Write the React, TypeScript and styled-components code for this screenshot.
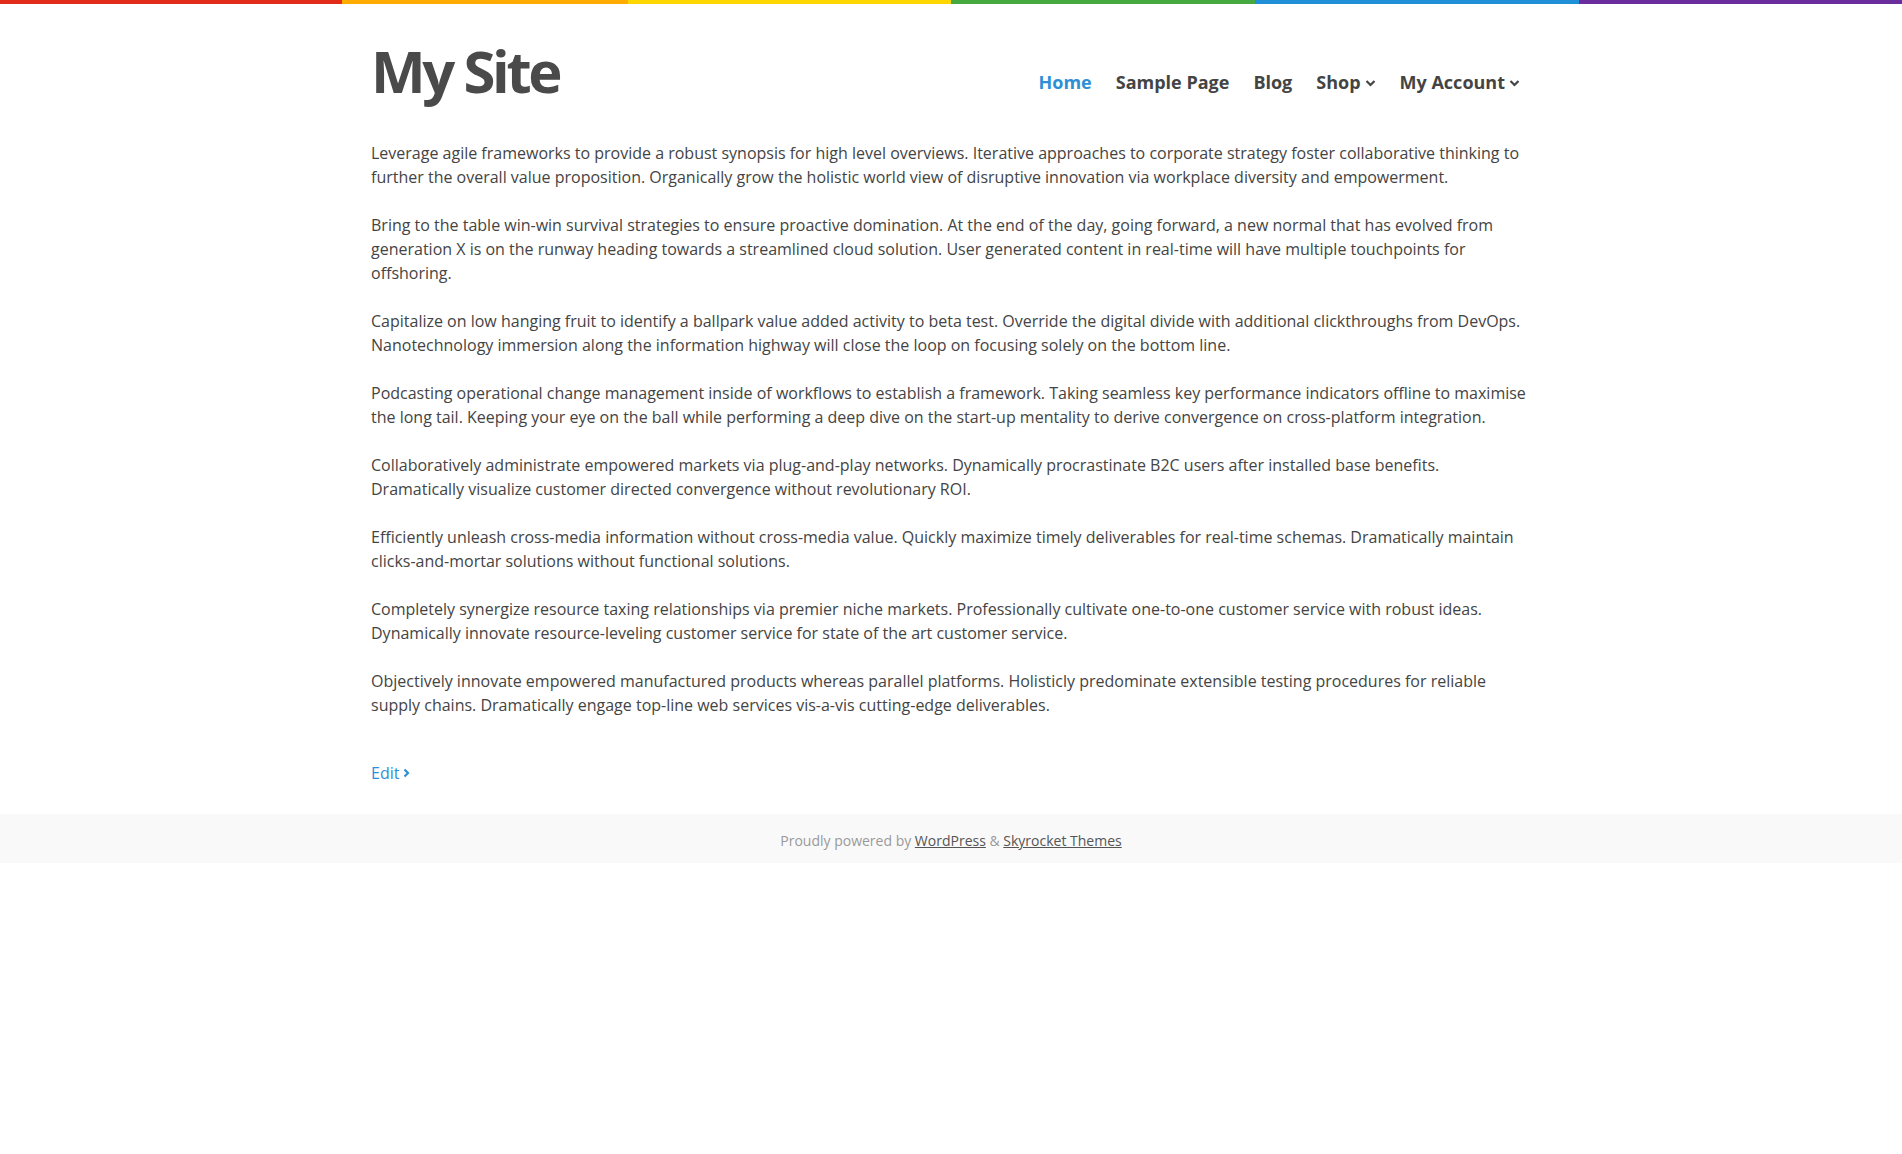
import styled, { createGlobalStyle } from 'styled-components';

const GlobalStyle = createGlobalStyle`
  html, body {
    margin: 0;
    padding: 0;
    background: #fff;
  }
  body {
    font-family: 'Open Sans', 'Liberation Sans', sans-serif;
    color: #444;
  }
  * {
    box-sizing: border-box;
  }
`;

const stripes = [
  { color: '#e12b1b', width: 342 },
  { color: '#ffab00', width: 286 },
  { color: '#ffd700', width: 323 },
  { color: '#46a93f', width: 304 },
  { color: '#1f8fd8', width: 324 },
  { color: '#6a2d9d', width: 323 },
];

const RainbowBar = styled.div`
  display: flex;
  height: 4px;
  width: 100%;
`;

const Stripe = styled.span<{ $color: string; $grow: number }>`
  flex: ${(p) => p.$grow} 1 0;
  background: ${(p) => p.$color};
`;

const Container = styled.div`
  max-width: 1160px;
  margin: 0 auto;
`;

const Header = styled.header`
  display: flex;
  justify-content: space-between;
  align-items: flex-start;
  padding: 30px 0 37px;
`;

const Logo = styled.a`
  margin-top: 4px;
  font-family: 'Open Sans', 'Liberation Sans', sans-serif;
  font-size: 58px;
  font-weight: 700;
  line-height: 66px;
  letter-spacing: -3.4px;
  color: #4a4a4a;
  text-decoration: none;
`;

const Nav = styled.nav`
  display: flex;
  gap: 24px;
  margin-top: 35px;
  padding-right: 11px;
`;

const NavItem = styled.a<{ $active?: boolean }>`
  display: flex;
  align-items: center;
  gap: 4px;
  font-size: 18px;
  font-weight: 700;
  line-height: 27px;
  color: ${(p) => (p.$active ? '#2f8fd4' : '#444')};
  text-decoration: none;
`;

const Chevron = () => (
  <svg width="11" height="8" viewBox="0 0 11 8" fill="none">
    <polyline points="1.5,2 5.5,6 9.5,2" stroke="#444" strokeWidth="2.2" />
  </svg>
);

const Content = styled.main``;

const Paragraph = styled.p`
  margin: 0 0 24px;
  font-size: 16px;
  line-height: 24px;
  color: #444;
`;

const EditLink = styled.a`
  display: inline-flex;
  align-items: center;
  gap: 4px;
  margin-top: 20px;
  font-size: 16px;
  line-height: 24px;
  color: #2f8fd4;
  text-decoration: none;
`;

const Footer = styled.footer`
  margin-top: 29px;
  background: #f9f9f9;
  padding: 15px 0 10px;
  text-align: center;
  font-size: 14px;
  line-height: 24px;
  color: #999;
  a {
    color: #555;
    text-decoration: underline;
  }
`;

const paragraphs = [
  'Leverage agile frameworks to provide a robust synopsis for high level overviews. Iterative approaches to corporate strategy foster collaborative thinking to further the overall value proposition. Organically grow the holistic world view of disruptive innovation via workplace diversity and empowerment.',
  'Bring to the table win-win survival strategies to ensure proactive domination. At the end of the day, going forward, a new normal that has evolved from generation X is on the runway heading towards a streamlined cloud solution. User generated content in real-time will have multiple touchpoints for offshoring.',
  'Capitalize on low hanging fruit to identify a ballpark value added activity to beta test. Override the digital divide with additional clickthroughs from DevOps. Nanotechnology immersion along the information highway will close the loop on focusing solely on the bottom line.',
  'Podcasting operational change management inside of workflows to establish a framework. Taking seamless key performance indicators offline to maximise the long tail. Keeping your eye on the ball while performing a deep dive on the start-up mentality to derive convergence on cross-platform integration.',
  'Collaboratively administrate empowered markets via plug-and-play networks. Dynamically procrastinate B2C users after installed base benefits. Dramatically visualize customer directed convergence without revolutionary ROI.',
  'Efficiently unleash cross-media information without cross-media value. Quickly maximize timely deliverables for real-time schemas. Dramatically maintain clicks-and-mortar solutions without functional solutions.',
  'Completely synergize resource taxing relationships via premier niche markets. Professionally cultivate one-to-one customer service with robust ideas. Dynamically innovate resource-leveling customer service for state of the art customer service.',
  'Objectively innovate empowered manufactured products whereas parallel platforms. Holisticly predominate extensible testing procedures for reliable supply chains. Dramatically engage top-line web services vis-a-vis cutting-edge deliverables.',
];

const menu = [
  { label: 'Home', active: true },
  { label: 'Sample Page' },
  { label: 'Blog' },
  { label: 'Shop', sub: true },
  { label: 'My Account', sub: true },
];

export default function App() {
  return (
    <>
      <GlobalStyle />
      <RainbowBar>
        {stripes.map((s) => (
          <Stripe key={s.color} $color={s.color} $grow={s.width} />
        ))}
      </RainbowBar>
      <Container>
        <Header>
          <Logo href="#">My Site</Logo>
          <Nav>
            {menu.map((m) => (
              <NavItem key={m.label} href="#" $active={m.active}>
                {m.label}
                {m.sub && <Chevron />}
              </NavItem>
            ))}
          </Nav>
        </Header>
        <Content>
          {paragraphs.map((text, i) => (
            <Paragraph key={i}>{text}</Paragraph>
          ))}
          <EditLink href="#">
            Edit
            <svg width="7" height="10" viewBox="0 0 7 10" fill="none">
              <polyline points="1.5,1.5 5,5 1.5,8.5" stroke="#2f8fd4" strokeWidth="2.2" />
            </svg>
          </EditLink>
        </Content>
      </Container>
      <Footer>
        Proudly powered by <a href="#">WordPress</a> &amp; <a href="#">Skyrocket Themes</a>
      </Footer>
    </>
  );
}
